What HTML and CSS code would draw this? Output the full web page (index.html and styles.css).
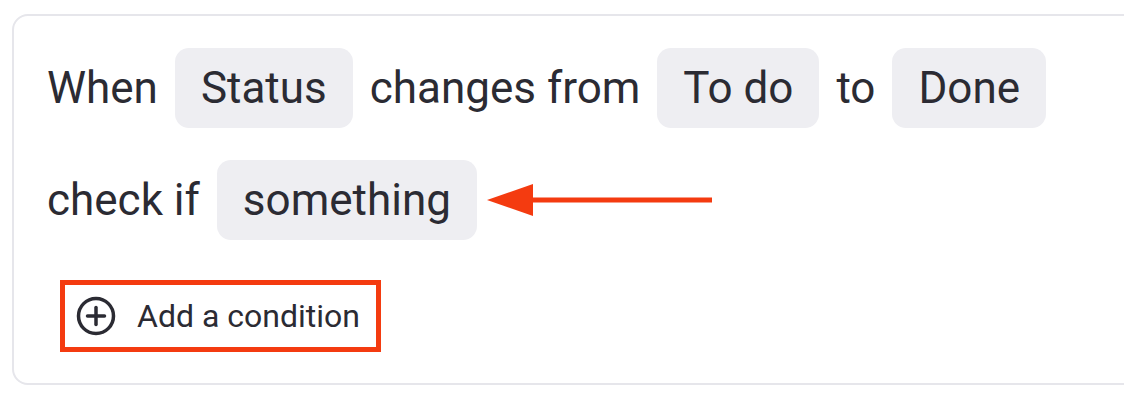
FILE: index.html
```html
<!DOCTYPE html>
<html lang="en">
<head>
<meta charset="UTF-8">
<title>Rule builder</title>
<link rel="stylesheet" href="styles.css">
</head>
<body>
    <div class="card">
        <div class="row">
            <span class="word">When</span>
            <span class="chip">Status</span>
            <span class="word">changes from</span>
            <span class="chip">To do</span>
            <span class="word">to</span>
            <span class="chip">Done</span>
        </div>
        <div class="row">
            <span class="word">check if</span>
            <span class="chip">something</span>
            <svg class="arrow" width="226" height="32" viewBox="0 0 226 32">
                <line x1="40" y1="16" x2="225" y2="16" stroke="#f43b10" stroke-width="5"/>
                <polygon points="0,16 46,0 46,32" fill="#f43b10"/>
            </svg>
        </div>
        <div class="actions">
            <button class="add-btn" type="button">
                <svg width="40" height="40" viewBox="0 0 40 40">
                    <circle cx="20" cy="20" r="17.5" fill="none" stroke="#2b2b33" stroke-width="3.5"/>
                    <line x1="20" y1="11.5" x2="20" y2="28.5" stroke="#2b2b33" stroke-width="3.5" stroke-linecap="round"/>
                    <line x1="11.5" y1="20" x2="28.5" y2="20" stroke="#2b2b33" stroke-width="3.5" stroke-linecap="round"/>
                </svg>
                <span>Add a condition</span>
            </button>
        </div>
    </div>
</body>
</html>
```

FILE: styles.css
```css
body {
    margin: 0;
    background-color: white;
    font-family: Roboto, "Liberation Sans", sans-serif;
    color: #2b2b33;
    overflow: hidden;
}
.card {
    width: calc(100% + 40px);
    margin: 14px 0 0 12px;
    border: 2px solid #e6e6eb;
    border-radius: 16px;
    padding: 32px 0 31px 33px;
    display: flex;
    flex-direction: column;
    gap: 32px;
}
.row {
    display: flex;
    align-items: center;
    gap: 17px;
    font-size: 44px;
}
.chip {
    background-color: #eeeef2;
    border-radius: 14px;
    height: 80px;
    line-height: 80px;
    padding: 0 26px;
}
.arrow {
    margin-left: -7px;
}
.actions {
    display: flex;
    margin-top: 8px;
    margin-left: 13px;
}
.add-btn {
    display: flex;
    align-items: center;
    gap: 21px;
    height: 72px;
    padding: 0 16px 0 11px;
    border: 5px solid #f43b10;
    background: white;
    font-family: inherit;
    font-size: 32px;
    color: #2b2b33;
}
```
